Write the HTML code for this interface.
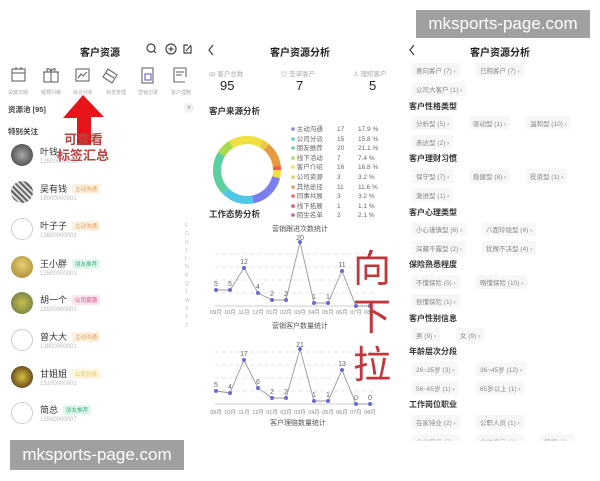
<!DOCTYPE html>
<html><head><meta charset="utf-8"><style>
*{margin:0;padding:0;box-sizing:border-box}
body{width:600px;height:480px;background:#fff;position:relative;overflow:hidden;font-family:"Liberation Sans","Noto Sans CJK SC",sans-serif;color:#333}
.a{position:absolute;white-space:nowrap}
.t{font-size:10px;font-weight:bold;color:#222}
.lab{font-size:5px;color:#aaa;text-align:center;width:32px}
.nm{font-size:9px;color:#333}
.ph{font-size:6px;color:#bbb}
.tag{font-size:5.5px;padding:1px 3px;border-radius:2px}
.av{width:22px;height:22px;border-radius:50%}
.avo{width:22px;height:22px;border-radius:50%;border:1px solid #ccc;background:#fff}
.sec{font-size:8px;color:#333;font-weight:bold}
.tg{font-size:6.5px;color:#888;padding:2px 4px;background:#f7f7f7;border-radius:2px}
.wm{background:#a0a0a0;color:#fff;font-size:17px;display:flex;align-items:center;justify-content:center}
.lg{font-size:6.5px;color:#666}
</style></head><body>

<!-- LEFT PANEL -->
<div class="a t" style="left:80px;top:44px">客户资源</div>
<svg class="a" style="left:143px;top:42px" width="50" height="14" viewBox="0 0 50 14" fill="none" stroke="#444" stroke-width="1.2">
<circle cx="8" cy="6" r="4"/><line x1="11" y1="9" x2="13" y2="11"/>
<circle cx="28" cy="7" r="5"/><line x1="25.5" y1="7" x2="30.5" y2="7"/><line x1="28" y1="4.5" x2="28" y2="9.5"/>
<path d="M48 4 V11 H41 V3 H45"/><path d="M43 9 L48 3"/></svg>
<svg class="a" style="left:8px;top:66px" width="185" height="20" viewBox="0 0 185 20" fill="none" stroke="#666" stroke-width="1.1">
<rect x="4" y="3" width="13" height="12"/><line x1="4" y1="7" x2="17" y2="7"/><line x1="8" y1="1" x2="8" y2="4"/><line x1="13" y1="1" x2="13" y2="4"/>
<rect x="36" y="6" width="14" height="10"/><line x1="35" y1="6" x2="51" y2="6"/><line x1="43" y1="3" x2="43" y2="16"/><path d="M43 5 C40 1 37 3 40 5 M43 5 C46 1 49 3 46 5"/>
<rect x="68" y="3" width="13" height="12"/><path d="M70 12 L73 8 L75 10 L79 6"/>
<path d="M100 3 L109 9 L104 17 L95 11 Z"/><path d="M98 7 L106 12"/>
<rect x="134" y="2" width="11" height="15"/><rect x="137" y="8" width="6" height="6" stroke="#6a5acd"/>
<path d="M177 16 H166 V2 H178 V11"/><line x1="168" y1="6" x2="176" y2="6"/><line x1="168" y1="9" x2="174" y2="9"/>
</svg>
<div class="a lab" style="left:2px;top:89px">关键日期</div>
<div class="a lab" style="left:35px;top:89px">嘘寒问暖</div>
<div class="a lab" style="left:67px;top:89px">综合分析</div>
<div class="a lab" style="left:100px;top:89px">标签管理</div>
<div class="a lab" style="left:132px;top:89px">营销记录</div>
<div class="a lab" style="left:165px;top:89px">客户理赔</div>
<div class="a" style="left:8px;top:104px;font-size:7.5px;font-weight:bold;color:#444">资源池 [95]</div>
<div class="a" style="left:184px;top:103px;width:10px;height:10px;border-radius:50%;background:#f0f0f0;font-size:6px;text-align:center;line-height:10px;color:#666">▿</div>
<div class="a" style="left:8px;top:126px;font-size:7.5px;font-weight:bold;color:#444">特别关注</div>

<div class="a av" style="left:11px;top:144px;background:radial-gradient(circle,#aaa,#333)"></div>
<div class="a nm" style="left:40px;top:145px">叶钱</div><div class="a ph" style="left:40px;top:159px">13500000001</div>
<div class="a av" style="left:11px;top:181px;background:repeating-linear-gradient(45deg,#666 0 2px,#ddd 2px 4px)"></div>
<div class="a nm" style="left:40px;top:182px">吴有钱</div><div class="a tag" style="left:72px;top:184px;background:#fdf0e0;color:#e0a060">主动沟通</div><div class="a ph" style="left:40px;top:196px">18000000001</div>
<div class="a avo" style="left:11px;top:218px"></div>
<div class="a nm" style="left:40px;top:219px">叶子子</div><div class="a tag" style="left:72px;top:221px;background:#fdf0e0;color:#e0a060">主动沟通</div><div class="a ph" style="left:40px;top:233px">13600000001</div>
<div class="a av" style="left:11px;top:256px;background:radial-gradient(circle at 50% 40%,#e8d070,#a08030)"></div>
<div class="a nm" style="left:40px;top:257px">王小胖</div><div class="a tag" style="left:72px;top:259px;background:#e0f7ee;color:#40b080">朋友推荐</div><div class="a ph" style="left:40px;top:271px">13500000001</div>
<div class="a av" style="left:11px;top:292px;background:radial-gradient(circle,#c8c050,#607040)"></div>
<div class="a nm" style="left:40px;top:293px">胡一个</div><div class="a tag" style="left:72px;top:295px;background:#fde4ec;color:#d04070">公司资源</div><div class="a ph" style="left:40px;top:307px">18500000001</div>
<div class="a avo" style="left:11px;top:329px"></div>
<div class="a nm" style="left:40px;top:330px">曾大大</div><div class="a tag" style="left:72px;top:332px;background:#fdf0e0;color:#e0a060">主动沟通</div><div class="a ph" style="left:40px;top:344px">13800000001</div>
<div class="a av" style="left:11px;top:366px;background:radial-gradient(circle,#d8c040,#402010)"></div>
<div class="a nm" style="left:40px;top:367px">甘姐姐</div><div class="a tag" style="left:72px;top:369px;background:#fdf6dc;color:#e0c050">公司分派</div><div class="a ph" style="left:40px;top:381px">15100000001</div>
<div class="a avo" style="left:11px;top:402px"></div>
<div class="a nm" style="left:40px;top:403px">简总</div><div class="a tag" style="left:63px;top:405px;background:#e0f7ee;color:#40b080">朋友推荐</div><div class="a ph" style="left:40px;top:417px">13500000007</div>
<div class="a" style="left:185px;top:222px;font-size:5px;color:#bbb;line-height:8.3px;width:6px">F<br>G<br>H<br>J<br>L<br>N<br>P<br>Q<br>T<br>W<br>X<br>Y<br>Z</div>

<svg class="a" style="left:60px;top:92px" width="50" height="56" viewBox="60 92 50 56"><path d="M83 95 L104 117 L91 117 L91 145 L77 145 L77 118 L63 118 Z" fill="#e8141b"/></svg>
<div class="a" style="left:64px;top:129px;font-size:13px;font-weight:bold;color:#b84540">可查看</div>
<div class="a" style="left:57px;top:145px;font-size:13px;font-weight:bold;color:#b84540">标签汇总</div>

<!-- MIDDLE PANEL -->
<svg class="a" style="left:207px;top:44px" width="8" height="12"><path d="M6 1 L2 6 L6 11" stroke="#444" fill="none" stroke-width="1.3"/></svg>
<div class="a t" style="left:270px;top:44px">客户资源分析</div>
<div class="a" style="left:209px;top:68px;font-size:6.5px;color:#aaa">ꝏ 客户总数</div>
<div class="a" style="left:281px;top:68px;font-size:6.5px;color:#aaa">▤ 签单客户</div>
<div class="a" style="left:353px;top:68px;font-size:6.5px;color:#aaa">♙ 理赔客户</div>
<div class="a" style="left:220px;top:78px;font-size:13px;color:#222">95</div>
<div class="a" style="left:296px;top:78px;font-size:13px;color:#222">7</div>
<div class="a" style="left:369px;top:78px;font-size:13px;color:#222">5</div>
<div class="a" style="left:209px;top:105px;font-size:8.5px;font-weight:bold;color:#333">客户来源分析</div>
<svg class="a" style="left:212px;top:135px" width="70" height="70" viewBox="-35 -35 70 70">
<g fill="none" stroke-width="8">
<circle r="30" stroke="#f0e040" pathLength="100" stroke-dasharray="100 0"/>
<circle r="30" stroke="#7b7ef0" pathLength="100" stroke-dasharray="17.9 100" stroke-dashoffset="-4"/>
<circle r="30" stroke="#4fc8e8" pathLength="100" stroke-dasharray="15.8 100" stroke-dashoffset="-21.9"/>
<circle r="30" stroke="#5cd0a0" pathLength="100" stroke-dasharray="21.1 100" stroke-dashoffset="-37.7"/>
<circle r="30" stroke="#a8dc50" pathLength="100" stroke-dasharray="7.4 100" stroke-dashoffset="-58.8"/>
<circle r="30" stroke="#f0e040" pathLength="100" stroke-dasharray="16.8 100" stroke-dashoffset="-66.2"/>
<circle r="30" stroke="#e8c850" pathLength="100" stroke-dasharray="3.2 100" stroke-dashoffset="-83"/>
<circle r="30" stroke="#e89a40" pathLength="100" stroke-dasharray="11.6 100" stroke-dashoffset="-86.2"/>
<circle r="30" stroke="#f06050" pathLength="100" stroke-dasharray="3.2 100" stroke-dashoffset="-97.8"/>
</g></svg>
<div class="a lg" style="left:291px;top:125px;line-height:9.6px">
<span style="color:#7b7ef0">■</span> 主动沟通<br><span style="color:#4fc8e8">■</span> 公司分派<br><span style="color:#5cd0a0">■</span> 朋友推荐<br><span style="color:#a8dc50">■</span> 线下活动<br><span style="color:#f0e040">■</span> 客户介绍<br><span style="color:#e8c850">■</span> 公司资源<br><span style="color:#e89a40">■</span> 其他途径<br><span style="color:#f06050">■</span> 同事共展<br><span style="color:#e04080">■</span> 线下拓展<br><span style="color:#d050a0">■</span> 陌生名单</div>
<div class="a lg" style="left:337px;top:125px;line-height:9.6px">17<br>15<br>20<br>7<br>16<br>3<br>11<br>3<br>1<br>2</div>
<div class="a lg" style="left:358px;top:125px;line-height:9.6px">17.9 %<br>15.8 %<br>21.1 %<br>7.4 %<br>16.8 %<br>3.2 %<br>11.6 %<br>3.2 %<br>1.1 %<br>2.1 %</div>
<div class="a" style="left:209px;top:208px;font-size:8.5px;font-weight:bold;color:#333">工作态势分析</div>
<div class="a" style="left:272px;top:224px;font-size:7px;color:#555">营销跟进次数统计</div>
<div class="a" style="left:272px;top:321px;font-size:7px;color:#555">营销客户数量统计</div>
<div class="a" style="left:270px;top:418px;font-size:7px;color:#555">客户理赔数量统计</div>
<svg class="a" style="left:200px;top:230px" width="200" height="190" viewBox="200 230 200 190" font-family="Liberation Sans" font-size="7">
<g stroke="#ddd" stroke-dasharray="4 3" stroke-width="0.8">
<line x1="215" x2="375" y1="254" y2="254"/><line x1="215" x2="375" y1="267" y2="267"/><line x1="215" x2="375" y1="280" y2="280"/><line x1="215" x2="375" y1="293" y2="293"/>
<line x1="215" x2="375" y1="352" y2="352"/><line x1="215" x2="375" y1="365" y2="365"/><line x1="215" x2="375" y1="378" y2="378"/><line x1="215" x2="375" y1="391" y2="391"/>
</g>
<line x1="215" x2="375" y1="306" y2="306" stroke="#ccc"/><line x1="215" x2="375" y1="404" y2="404" stroke="#ccc"/>
<polyline fill="none" stroke="#999" stroke-width="0.9" points="216,290 230,290 244,268 258,293 272,300 286,300 300,242 314,303 328,303 342,271 356,306 370,306"/>
<polyline fill="none" stroke="#999" stroke-width="0.9" points="216,391 230,393 244,360 258,388 272,398 286,398 300,349 314,401 328,401 342,370 356,404 370,404"/>
<g fill="#6a6ad0">
<circle cx="216" cy="290" r="2"/><circle cx="230" cy="290" r="2"/><circle cx="244" cy="268" r="2"/><circle cx="258" cy="293" r="2"/><circle cx="272" cy="300" r="2"/><circle cx="286" cy="300" r="2"/><circle cx="300" cy="242" r="2"/><circle cx="314" cy="303" r="2"/><circle cx="328" cy="303" r="2"/><circle cx="342" cy="271" r="2"/><circle cx="356" cy="306" r="2"/><circle cx="370" cy="306" r="2"/>
<circle cx="216" cy="391" r="2"/><circle cx="230" cy="393" r="2"/><circle cx="244" cy="360" r="2"/><circle cx="258" cy="388" r="2"/><circle cx="272" cy="398" r="2"/><circle cx="286" cy="398" r="2"/><circle cx="300" cy="349" r="2"/><circle cx="314" cy="401" r="2"/><circle cx="328" cy="401" r="2"/><circle cx="342" cy="370" r="2"/><circle cx="356" cy="404" r="2"/><circle cx="370" cy="404" r="2"/>
</g>
<g fill="#666" text-anchor="middle">
<text x="216" y="286">5</text><text x="230" y="286">5</text><text x="244" y="264">12</text><text x="258" y="289">4</text><text x="272" y="296">2</text><text x="286" y="296">2</text><text x="300" y="240">20</text><text x="314" y="299">1</text><text x="328" y="299">1</text><text x="342" y="267">11</text>
<text x="216" y="387">5</text><text x="230" y="389">4</text><text x="244" y="356">17</text><text x="258" y="384">6</text><text x="272" y="394">2</text><text x="286" y="394">2</text><text x="300" y="347">21</text><text x="314" y="397">1</text><text x="328" y="397">1</text><text x="342" y="366">13</text><text x="356" y="400">0</text><text x="370" y="400">0</text>
</g>
<g fill="#888" font-size="5.5" text-anchor="middle">
<text x="216" y="314">09月</text><text x="230" y="314">10月</text><text x="244" y="314">11月</text><text x="258" y="314">12月</text><text x="272" y="314">01月</text><text x="286" y="314">02月</text><text x="300" y="314">03月</text><text x="314" y="314">04月</text><text x="328" y="314">05月</text><text x="342" y="314">06月</text><text x="356" y="314">07月</text><text x="370" y="314">08月</text>
<text x="216" y="414">09月</text><text x="230" y="414">10月</text><text x="244" y="414">11月</text><text x="258" y="414">12月</text><text x="272" y="414">01月</text><text x="286" y="414">02月</text><text x="300" y="414">03月</text><text x="314" y="414">04月</text><text x="328" y="414">05月</text><text x="342" y="414">06月</text><text x="356" y="414">07月</text><text x="370" y="414">08月</text>
</g></svg>
<div class="a" style="left:353px;top:246px;font-size:38px;line-height:48px;color:#c0363a;width:45px">向<br>下<br>拉</div>

<!-- RIGHT PANEL -->
<svg class="a" style="left:408px;top:44px" width="8" height="12"><path d="M6 1 L2 6 L6 11" stroke="#444" fill="none" stroke-width="1.3"/></svg>
<div class="a t" style="left:470px;top:44px">客户资源分析</div>
<div class="a tg" style="left:412px;top:63px">意向客户 (7) ›</div><div class="a tg" style="left:476px;top:63px">已购客户 (7) ›</div>
<div class="a tg" style="left:412px;top:82px">公司大客户 (1) ›</div>
<div class="a sec" style="left:409px;top:101px">客户性格类型</div>
<div class="a tg" style="left:412px;top:116px">分析型 (5) ›</div><div class="a tg" style="left:469px;top:116px">驱动型 (1) ›</div><div class="a tg" style="left:526px;top:116px">温和型 (10) ›</div>
<div class="a tg" style="left:412px;top:135px">表达型 (2) ›</div>
<div class="a sec" style="left:409px;top:153px">客户理财习惯</div>
<div class="a tg" style="left:412px;top:169px">保守型 (7) ›</div><div class="a tg" style="left:469px;top:169px">稳健型 (8) ›</div><div class="a tg" style="left:526px;top:169px">投资型 (1) ›</div>
<div class="a tg" style="left:412px;top:188px">激进型 (1) ›</div>
<div class="a sec" style="left:409px;top:207px">客户心理类型</div>
<div class="a tg" style="left:412px;top:222px">小心谨慎型 (6) ›</div><div class="a tg" style="left:482px;top:222px">八面玲珑型 (4) ›</div>
<div class="a tg" style="left:412px;top:241px">深藏不露型 (2) ›</div><div class="a tg" style="left:482px;top:241px">犹豫不决型 (4) ›</div>
<div class="a sec" style="left:409px;top:259px">保险熟悉程度</div>
<div class="a tg" style="left:412px;top:275px">不懂保险 (5) ›</div><div class="a tg" style="left:476px;top:275px">略懂保险 (10) ›</div>
<div class="a tg" style="left:412px;top:294px">很懂保险 (1) ›</div>
<div class="a sec" style="left:409px;top:313px">客户性别信息</div>
<div class="a tg" style="left:412px;top:328px">男 (9) ›</div><div class="a tg" style="left:456px;top:328px">女 (9) ›</div>
<div class="a sec" style="left:409px;top:346px">年龄层次分段</div>
<div class="a tg" style="left:412px;top:362px">26~35岁 (3) ›</div><div class="a tg" style="left:476px;top:362px">36~45岁 (12) ›</div>
<div class="a tg" style="left:412px;top:381px">56~65岁 (1) ›</div><div class="a tg" style="left:476px;top:381px">65岁以上 (1) ›</div>
<div class="a sec" style="left:409px;top:399px">工作岗位职业</div>
<div class="a tg" style="left:412px;top:415px">在家待业 (2) ›</div><div class="a tg" style="left:476px;top:415px">公职人员 (1) ›</div>
<div class="a tg" style="left:412px;top:434px;color:#bbb">企业职员 (7) ›</div><div class="a tg" style="left:476px;top:434px;color:#bbb">个体商户 (2) ›</div><div class="a tg" style="left:540px;top:434px;color:#bbb">都师 (2) ›</div>
<div class="a" style="left:400px;top:441px;width:200px;height:40px;background:#fff"></div>

<div class="a wm" style="left:416px;top:10px;width:174px;height:28px">mksports-page.com</div>
<div class="a wm" style="left:10px;top:440px;width:174px;height:30px">mksports-page.com</div>
</body></html>
